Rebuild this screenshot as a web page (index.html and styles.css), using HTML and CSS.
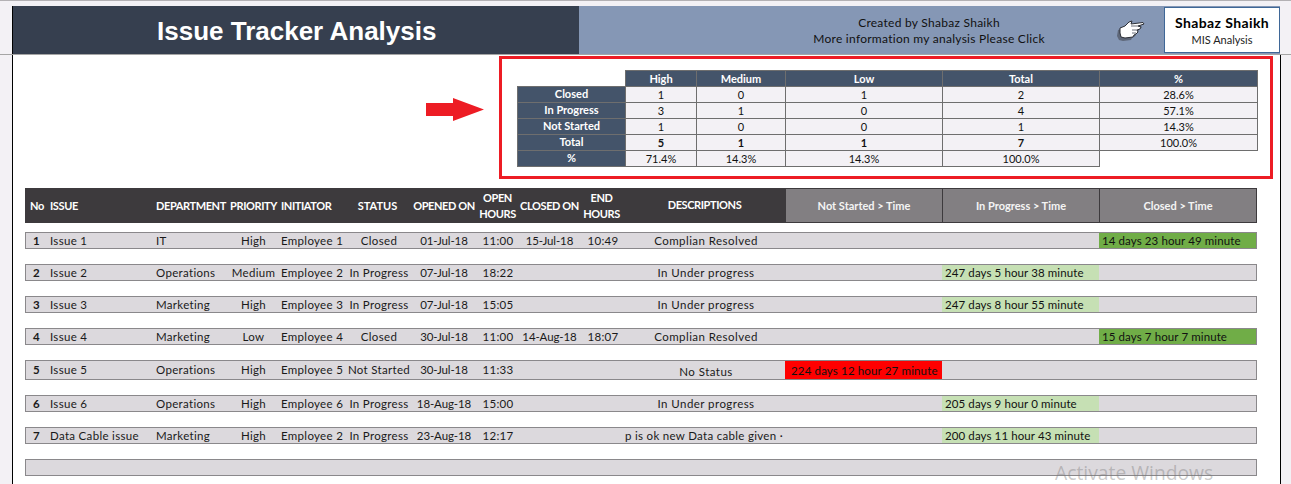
FILE: index.html
```html
<!DOCTYPE html>
<html lang="en">
<head>
<meta charset="utf-8">
<title>Issue Tracker Analysis</title>
<link rel="stylesheet" href="styles.css">
</head>
<body>
<div class="sheet">
  <header class="banner">
    <h1 class="banner-title">Issue Tracker Analysis</h1>
    <div class="banner-info">
      <div class="credit"><span>Created by Shabaz Shaikh</span><span>More information my analysis Please Click</span></div>
      <svg class="hand" viewBox="0 0 30 24" width="30" height="24" aria-hidden="true">
        <path d="M2 12 L7 10 L11 6 L14 5 L13 8 L24 7 L26 9 L21 11 L23 12 L22 14 L19 15 L20 17 L18 19 L16 20 L15 22 L7 23 L3 22 L1 18 Z" fill="#4d5360" opacity=".7"/>
        <path d="M4 10 L9 8 L13 4 L16 3 L15 6 L27 4.500 L28 6 L22 8 L25 9 L24 11 L21 12 L22 14 L20 16 L18 17 L17 19 L9 20 L5 19 L4 15 Z" fill="#fff" stroke="#2c2f36" stroke-width="1"/>
        <path d="M15 8 H22 M16 12 H21 M16 15 H20" stroke="#6b6f78" stroke-width="1" fill="none"/>
      </svg>
      <div class="brand"><strong>Shabaz Shaikh</strong><span>MIS Analysis</span></div>
    </div>
  </header>
  <div class="rule"></div>
  <main class="body">
    <section class="summary-row">
      <svg class="arrow" viewBox="0 0 58 23" width="58" height="23" aria-hidden="true"><path d="M0 5 H27 V0 L58 11.500 L27 23 V18 H0 Z" fill="#ed1c24"/></svg>
      <div class="frame">
        <div class="summary">
          <div class="blank"></div><div class="sh">High</div><div class="sh">Medium</div><div class="sh">Low</div><div class="sh">Total</div><div class="sh">%</div>
          <div class="sh lbl">Closed</div><div class="sc">1</div><div class="sc">0</div><div class="sc">1</div><div class="sc">2</div><div class="sc">28.6%</div>
          <div class="sh lbl">In Progress</div><div class="sc">3</div><div class="sc">1</div><div class="sc">0</div><div class="sc">4</div><div class="sc">57.1%</div>
          <div class="sh lbl">Not Started</div><div class="sc">1</div><div class="sc">0</div><div class="sc">0</div><div class="sc">1</div><div class="sc">14.3%</div>
          <div class="sh lbl">Total</div><div class="sc b">5</div><div class="sc b">1</div><div class="sc b">1</div><div class="sc b">7</div><div class="sc">100.0%</div>
          <div class="sh lbl">%</div><div class="sc">71.4%</div><div class="sc">14.3%</div><div class="sc">14.3%</div><div class="sc">100.0%</div><div class="blank"></div>
        </div>
      </div>
    </section>
    <section class="tracker">
      <div class="grid head">
        <div class="c ctr no">No</div><div class="c">ISSUE</div><div class="c dep">DEPARTMENT</div><div class="c ctr">PRIORITY</div><div class="c ini">INITIATOR</div><div class="c ctr st">STATUS</div><div class="c ctr">OPENED ON</div><div class="c ctr">OPEN<br>HOURS</div><div class="c ctr">CLOSED ON</div><div class="c ctr">END<br>HOURS</div><div class="c ctr ds">DESCRIPTIONS</div><div class="c ctr th">Not Started &gt; Time</div><div class="c ctr th">In Progress &gt; Time</div><div class="c ctr th end">Closed &gt; Time</div>
      </div>
      <div class="grid row">
        <div class="c ctr b">1</div><div class="c">Issue 1</div><div class="c dep">IT</div><div class="c ctr">High</div><div class="c ini">Employee 1</div><div class="c ctr">Closed</div><div class="c ctr d">01-Jul-18</div><div class="c ctr oh">11:00</div><div class="c ctr d">15-Jul-18</div><div class="c ctr eh">10:49</div><div class="c ctr ds">Complian Resolved</div><div class="c"></div><div class="c"></div><div class="c t closed">14 days 23 hour 49 minute</div>
      </div>
      <div class="grid row">
        <div class="c ctr b">2</div><div class="c">Issue 2</div><div class="c dep">Operations</div><div class="c ctr">Medium</div><div class="c ini">Employee 2</div><div class="c ctr">In Progress</div><div class="c ctr d">07-Jul-18</div><div class="c ctr oh">18:22</div><div class="c ctr"></div><div class="c ctr"></div><div class="c ctr ds">In Under progress</div><div class="c"></div><div class="c t prog">247 days 5 hour 38 minute</div><div class="c"></div>
      </div>
      <div class="grid row">
        <div class="c ctr b">3</div><div class="c">Issue 3</div><div class="c dep">Marketing</div><div class="c ctr">High</div><div class="c ini">Employee 3</div><div class="c ctr">In Progress</div><div class="c ctr d">07-Jul-18</div><div class="c ctr oh">15:05</div><div class="c ctr"></div><div class="c ctr"></div><div class="c ctr ds">In Under progress</div><div class="c"></div><div class="c t prog">247 days 8 hour 55 minute</div><div class="c"></div>
      </div>
      <div class="grid row">
        <div class="c ctr b">4</div><div class="c">Issue 4</div><div class="c dep">Marketing</div><div class="c ctr">Low</div><div class="c ini">Employee 4</div><div class="c ctr">Closed</div><div class="c ctr d">30-Jul-18</div><div class="c ctr oh">11:00</div><div class="c ctr d">14-Aug-18</div><div class="c ctr eh">18:07</div><div class="c ctr ds">Complian Resolved</div><div class="c"></div><div class="c"></div><div class="c t closed">15 days 7 hour 7 minute</div>
      </div>
      <div class="grid row tall">
        <div class="c ctr b">5</div><div class="c">Issue 5</div><div class="c dep">Operations</div><div class="c ctr">High</div><div class="c ini">Employee 5</div><div class="c ctr">Not Started</div><div class="c ctr d">30-Jul-18</div><div class="c ctr oh">11:33</div><div class="c ctr"></div><div class="c ctr"></div><div class="c ctr ds low">No Status</div><div class="c t late">224 days 12 hour 27 minute</div><div class="c"></div><div class="c"></div>
      </div>
      <div class="grid row">
        <div class="c ctr b">6</div><div class="c">Issue 6</div><div class="c dep">Operations</div><div class="c ctr">High</div><div class="c ini">Employee 6</div><div class="c ctr">In Progress</div><div class="c ctr d">18-Aug-18</div><div class="c ctr oh">15:00</div><div class="c ctr"></div><div class="c ctr"></div><div class="c ctr ds">In Under progress</div><div class="c"></div><div class="c t prog">205 days 9 hour 0 minute</div><div class="c"></div>
      </div>
      <div class="grid row">
        <div class="c ctr b">7</div><div class="c">Data Cable issue</div><div class="c dep">Marketing</div><div class="c ctr">High</div><div class="c ini">Employee 2</div><div class="c ctr">In Progress</div><div class="c ctr d">23-Aug-18</div><div class="c ctr oh">12:17</div><div class="c ctr"></div><div class="c ctr"></div><div class="c ctr fit">p is ok new Data cable given ·</div><div class="c"></div><div class="c t prog">200 days 11 hour 43 minute</div><div class="c"></div>
      </div>
      <div class="grid row"></div>
    </section>
    <div class="watermark">Activate Windows</div>
  </main>
</div>
</body>
</html>
```
FILE: styles.css
```css
* { box-sizing: border-box; }
html, body { margin: 0; height: 484px; overflow: hidden; }
body { background: #f3f1f5; font-family: Lato, "Liberation Sans", sans-serif; color: #1a1a1a; }
.sheet { height: 484px; border-top: 1px solid #b3b1b4; padding-top: 5px; }

.banner { display: flex; height: 48px; margin-left: 12px; margin-right: 11px; border-left: 1px solid #000; }
.banner-title { width: 566px; margin: 0; background: #363f4f; color: #fff; font: bold 26px "Liberation Sans", sans-serif; padding-left: 144px; line-height: 50px; }
.banner-info { flex: 1; display: flex; align-items: center; background: #8597b5; }
.credit { flex: none; width: 532px; padding: 1px 0 0 168px; display: flex; flex-direction: column; align-items: center; font-size: 12px; line-height: 16px; color: #111; letter-spacing: .27px; white-space: nowrap; }
.hand { flex: none; margin-left: 5px; }
.brand { flex: none; width: 116px; height: 46px; margin-left: 18px; background: #fff; border: 1px solid #3f6797; display: flex; flex-direction: column; align-items: center; justify-content: center; }
.brand strong { font-size: 14px; line-height: 18px; color: #000; letter-spacing: .4px; }
.brand span { font-size: 11px; line-height: 15px; color: #222; }
.rule { height: 1px; background: #a5a5a5; }

.body { position: relative; height: 429px; margin-left: 12px; margin-right: 10px; background: #fff; border-left: 1px solid #000; border-right: 1px solid #000; overflow: hidden; }
.summary-row { display: flex; align-items: flex-start; justify-content: flex-end; padding: 1px 7px 0 0; gap: 15px; }
.arrow { flex: none; margin-top: 42px; }
.frame { width: 774px; height: 123px; border: 3px solid #ed1c24; padding: 11px 0 0 15px; }
.summary { display: grid; grid-template-columns: 108px 71px 89px 157px 157px 158px; grid-auto-rows: 16px; font-size: 11px; text-align: center; line-height: 15px; }
.sh { background: #44546a; color: #fff; font-weight: bold; border: 1px solid #6e6e6e; margin: 0 -1px -1px 0; }
.sh.lbl { line-height: 13px; }
.sc { background: #f3f1f5; color: #111; border: 1px solid #6e6e6e; margin: 0 -1px -1px 0; }
.b { font-weight: bold; }

.tracker { margin: 9px 0 0 12px; width: 1232px; }
.grid { display: grid; grid-template-columns: 22px 105px 76px 51px 68px 64px 66px 41px 63px 41px 163px 157px 157px 158px; }
.c { display: flex; align-items: center; justify-content: flex-start; white-space: nowrap; overflow: hidden; font-size: 11.500px; letter-spacing: .32px; min-width: 0; padding-left: 3px; }
.c.dep { padding-left: 4px; }
.c.ini { padding-left: 2px; }
.c.ctr { justify-content: center; text-align: center; padding-left: 0; }
.c.d { letter-spacing: -.1px; }
.c.oh { padding-left: 1px; }
.c.eh { padding-left: 3px; }
.c.ds { letter-spacing: .45px; padding-left: 5px; }
.c.fit { letter-spacing: .3px; padding-left: 1px; }
.head { height: 35px; background: #3d3a3d; color: #fff; margin-bottom: 9px; }
.head .c { font-weight: bold; font-size: 11px; line-height: 16px; letter-spacing: -.4px; }
.head .c.no { padding-left: 2px; }
.head .c.st { letter-spacing: 0; padding-right: 3px; }
.head .c.ds { padding: 0 0 2px 2px; }
.head .c.th { background: #827f82; border: 1px solid #3d3a3d; border-right: 0; color: #f4f4f4; letter-spacing: 0; padding-left: 0; }
.head .c.end { border-right: 1px solid #3d3a3d; }
.row { height: 17px; margin-bottom: 15px; background: #dcd9dd; border: 1px solid #8a888b; grid-template-columns: 21px 105px 76px 51px 68px 64px 66px 41px 63px 41px 163px 157px 157px 157px; }
.row .c { height: 15px; }
.row.tall { height: 20px; }
.row.tall .c { height: 17px; }
.row.tall .c.t { height: 18px; }
.row.tall .c.low { height: 18px; padding-top: 3px; }
.c.t { padding-left: 3px; color: #111; letter-spacing: .1px; }
.closed { background: #70ad47; }
.prog { background: #c6e0b4; }
.c.late { background: #ff0000; letter-spacing: .15px; padding-left: 6px; }
.watermark { position: absolute; left: 1042px; top: 408px; font: 19.300px/20px "Open Sans", sans-serif; color: rgba(120, 120, 120, .4); white-space: nowrap; }
```
